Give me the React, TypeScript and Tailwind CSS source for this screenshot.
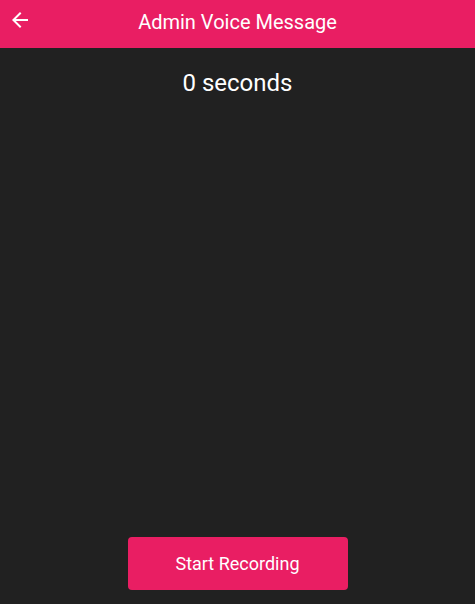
import { MdArrowBack } from 'react-icons/md';

export default function App() {
  return (
    <div className="flex h-screen flex-col bg-[#212121] font-['Roboto',sans-serif] text-white">
      <header className="relative flex h-12 shrink-0 items-center justify-center bg-[#e91e63]">
        <button className="absolute left-2 top-2">
          <MdArrowBack className="h-6 w-6" />
        </button>
        <h1 className="mb-1 text-[20px] leading-none">Admin Voice Message</h1>
      </header>
      <main className="flex flex-1 flex-col items-center">
        <p className="mt-[21px] text-[24px] leading-[28px]">0 seconds</p>
        <div className="flex-1" />
        <button className="mb-[14px] h-[53px] w-[220px] rounded bg-[#e91e63] text-[18px] text-white">
          Start Recording
        </button>
      </main>
    </div>
  );
}
